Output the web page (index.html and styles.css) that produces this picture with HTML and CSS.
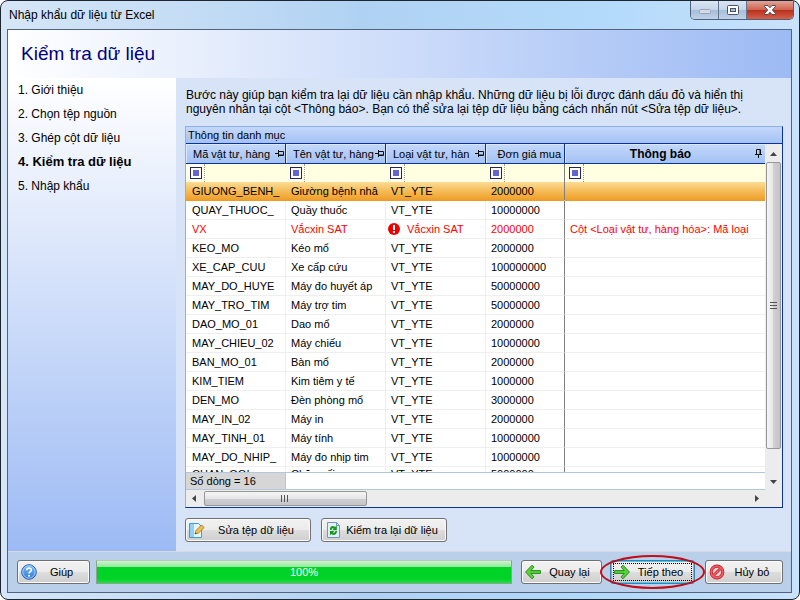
FILE: index.html
```html
<!DOCTYPE html>
<html lang="vi">
<head>
  <meta charset="UTF-8">
  <meta name="viewport" content="width=device-width, initial-scale=1.0">
  <title>Nhập khẩu dữ liệu từ Excel</title>
  <link rel="stylesheet" href="styles.css">
</head>
<body>
<div class="window">
  <header class="titlebar">
    <span class="titlebar-text">Nhập khẩu dữ liệu từ Excel</span>
    <div class="window-buttons">
      <button type="button" class="win-button" aria-label="Minimize">
        <svg width="14" height="14" viewBox="0 0 14 14"><rect x="1.5" y="6.5" width="11" height="4" rx="1" fill="#d3dae4" stroke="#98a5b8"/></svg>
      </button>
      <button type="button" class="win-button" aria-label="Maximize">
        <svg width="14" height="12" viewBox="0 0 14 12"><rect x="1.5" y="1.5" width="11" height="9" rx="1" fill="#fff" stroke="#4a5264"/><rect x="4.5" y="4.5" width="5" height="3" fill="#a9c0dc" stroke="#4a5264"/></svg>
      </button>
      <button type="button" class="win-button win-close" aria-label="Close">
        <svg width="14" height="12" viewBox="0 0 14 12"><path d="M1.5 1.5h3.500l2 2.200 2-2.200h3.500v1L9.300 6l3.200 3.500v1H9L7 8.300 5 10.500H1.500v-1L4.700 6 1.500 2.500z" fill="#fff" stroke="#5c4650"/></svg>
      </button>
    </div>
  </header>

  <div class="client">
    <div class="page-header">
      <h1>Kiểm tra dữ liệu</h1>
    </div>

    <div class="content">
      <nav class="steps">
        <ol>
          <li>1. Giới thiệu</li>
          <li>2. Chọn tệp nguồn</li>
          <li>3. Ghép cột dữ liệu</li>
          <li class="current">4. Kiểm tra dữ liệu</li>
          <li>5. Nhập khẩu</li>
        </ol>
      </nav>

      <main>
        <p class="intro">Bước này giúp bạn kiểm tra lại dữ liệu cần nhập khẩu. Những dữ liệu bị lỗi được đánh dấu đỏ và hiển thị<br>
          nguyên nhân tại cột &lt;Thông báo&gt;. Bạn có thể sửa lại tệp dữ liệu bằng cách nhấn nút &lt;Sửa tệp dữ liệu&gt;.</p>

        <section class="grid">
          <h2 class="grid-caption">Thông tin danh mục</h2>
          <div class="grid-body">
            <div class="grid-view">
              <div class="table-wrap">
                <table>
                  <colgroup>
                    <col class="col-wide"><col class="col-wide"><col class="col-wide"><col class="col-price"><col>
                  </colgroup>
                  <thead>
                  <tr>
                    <th><div class="head"><span>Mã vật tư, hàng</span><svg class="pin" width="9" height="9" viewBox="0 0 9 9"><path d="M0 4.500h3M3.500 1v7M4 2.500h4.500v4H4M4 6h4" fill="none" stroke="#111"/></svg></div></th>
                    <th><div class="head"><span>Tên vật tư, hàng</span><svg class="pin" width="9" height="9" viewBox="0 0 9 9"><path d="M0 4.500h3M3.500 1v7M4 2.500h4.500v4H4M4 6h4" fill="none" stroke="#111"/></svg></div></th>
                    <th><div class="head"><span>Loại vật tư, hàn</span><svg class="pin" width="9" height="9" viewBox="0 0 9 9"><path d="M0 4.500h3M3.500 1v7M4 2.500h4.500v4H4M4 6h4" fill="none" stroke="#111"/></svg></div></th>
                    <th class="price-head"><div class="head"><span>Đơn giá mua</span></div></th>
                    <th class="message-head"><div class="head"><span>Thông báo</span><svg class="pin" width="9" height="9" viewBox="0 0 9 9"><path d="M4.500 9V6M1 5.500h7M2.500 5V.500h4V5M6 1v4" fill="none" stroke="#111"/></svg></div></th>
                  </tr>
                  </thead>
                  <tbody>
                  <tr class="filter-row">
                    <td><div class="filter"><button type="button" aria-label="Lọc mã"></button><input type="text" aria-label="Mã vật tư"></div></td>
                    <td><div class="filter"><button type="button" aria-label="Lọc tên"></button><input type="text" aria-label="Tên vật tư"></div></td>
                    <td><div class="filter"><button type="button" aria-label="Lọc loại"></button><input type="text" aria-label="Loại vật tư"></div></td>
                    <td class="price"><div class="filter"><button type="button" aria-label="Lọc đơn giá"></button><input type="text" aria-label="Đơn giá"></div></td>
                    <td><div class="filter"><button type="button" aria-label="Lọc thông báo"></button><input type="text" aria-label="Thông báo"></div></td>
                  </tr>
                  <tr class="selected"><td>GIUONG_BENH_</td><td>Giường bệnh nhâ</td><td>VT_YTE</td><td class="price">2000000</td><td></td></tr>
                  <tr><td>QUAY_THUOC_</td><td>Quầy thuốc</td><td>VT_YTE</td><td class="price">10000000</td><td></td></tr>
                  <tr class="error">
                    <td>VX</td><td>Vắcxin SAT</td>
                    <td class="with-icon"><div><svg width="12" height="12" viewBox="0 0 12 12"><circle cx="6" cy="6" r="6" fill="#f00000"/><path d="M5 2h2v5H5zM5 8h2v2H5z" fill="#fff"/></svg>Vắcxin SAT</div></td>
                    <td class="price">2000000</td><td>Cột &lt;Loại vật tư, hàng hóa&gt;: Mã loại</td>
                  </tr>
                  <tr><td>KEO_MO</td><td>Kéo mổ</td><td>VT_YTE</td><td class="price">2000000</td><td></td></tr>
                  <tr><td>XE_CAP_CUU</td><td>Xe cấp cứu</td><td>VT_YTE</td><td class="price">100000000</td><td></td></tr>
                  <tr><td>MAY_DO_HUYE</td><td>Máy đo huyết áp</td><td>VT_YTE</td><td class="price">50000000</td><td></td></tr>
                  <tr><td>MAY_TRO_TIM</td><td>Máy trợ tim</td><td>VT_YTE</td><td class="price">50000000</td><td></td></tr>
                  <tr><td>DAO_MO_01</td><td>Dao mổ</td><td>VT_YTE</td><td class="price">2000000</td><td></td></tr>
                  <tr><td>MAY_CHIEU_02</td><td>Máy chiếu</td><td>VT_YTE</td><td class="price">10000000</td><td></td></tr>
                  <tr><td>BAN_MO_01</td><td>Bàn mổ</td><td>VT_YTE</td><td class="price">2000000</td><td></td></tr>
                  <tr><td>KIM_TIEM</td><td>Kim tiêm y tế</td><td>VT_YTE</td><td class="price">1000000</td><td></td></tr>
                  <tr><td>DEN_MO</td><td>Đèn phòng mổ</td><td>VT_YTE</td><td class="price">3000000</td><td></td></tr>
                  <tr><td>MAY_IN_02</td><td>Máy in</td><td>VT_YTE</td><td class="price">2000000</td><td></td></tr>
                  <tr><td>MAY_TINH_01</td><td>Máy tính</td><td>VT_YTE</td><td class="price">10000000</td><td></td></tr>
                  <tr><td>MAY_DO_NHIP_</td><td>Máy đo nhịp tim</td><td>VT_YTE</td><td class="price">10000000</td><td></td></tr>
                  <tr class="last-row"><td>CHAN_GOI_</td><td>Chăn gối</td><td>VT_YTE</td><td class="price">5000000</td><td></td></tr>
                  </tbody>
                </table>
              </div>
              <div class="summary"><span>Số dòng = 16</span></div>
            </div>
            <div class="scroll-v">
              <svg class="arrow" width="7" height="4" viewBox="0 0 7 4"><path d="M0 4L3.500 0 7 4z" fill="#444"/></svg>
              <div class="track"><div class="thumb"><svg width="7" height="8" viewBox="0 0 7 8"><path d="M0 .500h7M0 3.500h7M0 6.500h7" stroke="#555"/></svg></div></div>
              <svg class="arrow" width="7" height="4" viewBox="0 0 7 4"><path d="M0 0L3.500 4 7 0z" fill="#444"/></svg>
            </div>
          </div>
          <div class="scroll-h">
            <svg class="arrow" width="4" height="7" viewBox="0 0 4 7"><path d="M4 0L0 3.500 4 7z" fill="#444"/></svg>
            <div class="track"><div class="thumb"><svg width="8" height="7" viewBox="0 0 8 7"><path d="M.500 0v7M3.500 0v7M6.500 0v7" stroke="#555"/></svg></div></div>
            <svg class="arrow" width="4" height="7" viewBox="0 0 4 7"><path d="M0 0L4 3.500 0 7z" fill="#444"/></svg>
          </div>
        </section>

        <div class="actions">
          <button type="button" class="button">
            <svg width="16" height="16" viewBox="0 0 16 16"><path d="M.500 1.500h9l3 3v11H.500z" fill="#e4f5fe" stroke="#3f9bd8"/><path d="M1 2h4v13H1z" fill="#8fd0f4"/><path d="M6 12l1-3.500L12.500 3l2.700 2.500L9.500 11z" fill="#f3c146" stroke="#9a6d17" stroke-width=".800"/><path d="M6 12l.500-1.600 1.200 1z" fill="#333"/></svg>
            <span>Sửa tệp dữ liệu</span>
          </button>
          <button type="button" class="button">
            <svg width="16" height="16" viewBox="0 0 16 16"><path d="M2.500.500h9l3 3v12h-12z" fill="#e3effa" stroke="#7395bd"/><path d="M11.500.500v3h3" fill="none" stroke="#7395bd"/><path d="M5 8V7C5 3.800 8.300 3.300 10 5l1.800-1.400v4.600H7.300L8.600 6.800C7.700 5.800 6.800 6.400 6.700 8zM12 9c0 4-3.700 4.800-5.300 3L5 13.300V8.900h4.400L8.100 10.200c.900 1 2 .500 2.200-1.200z" fill="#159a20"/></svg>
            <span>Kiểm tra lại dữ liệu</span>
          </button>
        </div>
      </main>
    </div>

    <footer class="footer">
      <button type="button" class="button help">
        <svg width="16" height="16" viewBox="0 0 16 16"><defs><linearGradient id="blue" x2="0" y2="1"><stop stop-color="#7bbcf3"/><stop offset="1" stop-color="#2c7bdd"/></linearGradient></defs><circle cx="8" cy="8" r="7.300" fill="url(#blue)" stroke="#2a5fae"/><circle cx="8" cy="8" r="6.200" fill="none" stroke="#b8dbfa" stroke-width=".800"/><path d="M5.800 6.300c0-3 4.600-2.900 4.600-.300C10.400 7.800 8 7.700 8 9.500" fill="none" stroke="#fff" stroke-width="1.600"/><circle cx="8" cy="11.700" r="1" fill="#fff"/></svg>
        <span>Giúp</span>
      </button>
      <div class="progress" role="progressbar" aria-valuenow="100">100%</div>
      <button type="button" class="button back">
        <svg width="16" height="16" viewBox="0 0 16 16"><path d="M.600 8l6.400-6.800 2 1.900L5.800 6.600H15.400v2.800H5.800L9 12.900l-2 1.900z" fill="#58d236" stroke="#248a1c" stroke-linejoin="round"/></svg>
        <span>Quay lại</span>
      </button>
      <div class="next-wrap">
        <button type="button" class="button next">
          <svg width="16" height="16" viewBox="0 0 16 16"><path d="M15.400 8L9 1.200 7 3.100l3.200 3.500H.600v2.800h9.600L7 12.900l2 1.900z" fill="#58d236" stroke="#248a1c" stroke-linejoin="round"/></svg>
          <span>Tiếp theo</span>
        </button>
      </div>
      <button type="button" class="button cancel">
        <svg width="16" height="16" viewBox="0 0 16 16"><circle cx="8" cy="8" r="5.800" fill="#f6d3d5" stroke="#c8202c" stroke-width="3.200"/><path d="M4 12l8-8" stroke="#c8202c" stroke-width="3"/><circle cx="8" cy="8" r="5.800" fill="none" stroke="#ee6069" stroke-width="1.600"/><path d="M4 12l8-8" stroke="#ee6069" stroke-width="1.400"/></svg>
        <span>Hủy bỏ</span>
      </button>
    </footer>
  </div>
</div>
</body>
</html>
```
FILE: styles.css
```css
* {
  box-sizing: border-box;
}

body {
  margin: 0;
  background: #fff;
  font-family: "Liberation Sans", Arial, sans-serif;
  font-size: 12px;
  line-height: 14px;
  color: #000;
}

button, input {
  font: inherit;
  color: inherit;
}

h1, h2, p, ol {
  margin: 0;
  padding: 0;
  font-weight: normal;
}

.window {
  height: 100vh;
  display: flex;
  flex-direction: column;
  padding: 0 7px 6px 6px;
  border: 1px solid #1c2530;
  border-radius: 8px;
  background: linear-gradient(90deg, #d5e6f7, #c3dcf5 25%, #b0d2f2 45%, #b3dafa 75%, #c8e2fa);
}

/* title bar */
.titlebar {
  flex: none;
  height: 28px;
  display: flex;
  justify-content: space-between;
}

.titlebar-text {
  padding: 7px 2px;
}

.window-buttons {
  display: flex;
  height: 19px;
  margin-right: -2px;
  border: 1px solid #51607a;
  border-top: none;
  border-radius: 0 0 5px 5px;
  overflow: hidden;
}

.win-button {
  width: 28px;
  padding: 0;
  display: flex;
  align-items: center;
  justify-content: center;
  border: none;
  border-right: 1px solid #66758c;
  background: linear-gradient(#d9e5f3, #c4d5e9 50%, #a6bdd8 50%, #bed2e8);
}

.win-close {
  width: 46px;
  border-right: none;
  background: linear-gradient(#e0a598, #d0614e 50%, #b8301c 50%, #d4614a);
}

/* client area */
.client {
  flex: 1;
  min-height: 0;
  display: flex;
  flex-direction: column;
  border: 1px solid #52647c;
  background: #d7e4f8;
}

.page-header {
  flex: none;
  height: 48px;
  padding: 13px;
  background: linear-gradient(90deg, #fff, #9cbaf4);
}

h1 {
  font-size: 19px;
  line-height: 22px;
  color: #000080;
}

.content {
  flex: 1;
  min-height: 0;
  display: flex;
}

.steps {
  flex: none;
  width: 168px;
  padding: 0 10px;
  background: linear-gradient(#fff, #9cbaf4);
}

.steps ol {
  list-style: none;
}

.steps li {
  line-height: 24px;
}

.steps .current {
  font-size: 13px;
  font-weight: bold;
}

main {
  flex: 1;
  min-width: 0;
  display: flex;
  flex-direction: column;
  padding: 10px 8px 9px 9px;
}

.intro {
  padding: 0 1px 10px;
  white-space: nowrap;
}

/* data grid */
.grid {
  flex: 1;
  min-height: 0;
  display: flex;
  flex-direction: column;
  border: 1px solid #8cb0ee;
  border-right-color: #0a3298;
  border-bottom-color: #0a3298;
  background: #fff;
  font-size: 11px;
}

.grid-caption {
  flex: none;
  height: 17px;
  padding: 1px 2px;
  font-size: 11px;
  border-bottom: 1px solid #0a3298;
  background: linear-gradient(#c4d8fa, #a4c2f5);
}

.grid-body {
  flex: 1;
  min-height: 0;
  display: flex;
}

.grid-view {
  flex: 1;
  min-width: 0;
  display: flex;
  flex-direction: column;
}

.table-wrap {
  flex: 1;
  min-height: 0;
  overflow: hidden;
}

table {
  width: 100%;
  table-layout: fixed;
  border-collapse: separate;
  border-spacing: 0;
}

.col-wide {
  width: 100px;
}

.col-price {
  width: 79px;
}

th {
  height: 20px;
  padding: 0;
  font-weight: normal;
  border-right: 1px solid #0a3298;
  border-bottom: 1px solid #0a3298;
  box-shadow: inset 1px 1px #dbe7fc;
  background: linear-gradient(#c4d8fa, #a4c2f5);
}

.head {
  display: flex;
  align-items: center;
  justify-content: space-between;
  padding: 0 1px 0 7px;
  white-space: nowrap;
}

.pin {
  flex: none;
}

.price-head .head {
  justify-content: flex-end;
  padding-right: 3px;
}

.message-head {
  border-right: none;
  font-size: 12px;
  font-weight: bold;
}

.message-head .head {
  padding: 0 2px;
}

.message-head .head span {
  flex: 1;
  text-align: center;
}

td {
  height: 19px;
  padding: 0 0 0 5px;
  overflow: hidden;
  white-space: nowrap;
  border-right: 1px solid #efefef;
  border-bottom: 1px solid #efefef;
}

td:first-child {
  padding-left: 6px;
}

td:last-child {
  border-right: none;
}

td.price {
  border-right-color: #808080;
}

td.with-icon {
  padding-left: 2px;
}

.with-icon div {
  display: flex;
  align-items: center;
  gap: 7px;
}

.last-row td {
  vertical-align: top;
}

.filter-row td {
  height: 18px;
  padding: 0 0 0 4px;
  border-bottom: none;
  border-right-color: #ffffe1;
  background: #ffffe1;
}

.filter-row td.price {
  border-right-color: #808080;
}

.filter {
  display: flex;
  align-items: center;
  gap: 2px;
}

.filter button {
  flex: none;
  width: 12px;
  height: 12px;
  padding: 0;
  border: 1px solid #26265e;
  background: #6464d0;
  box-shadow: inset 0 0 0 2px #fff;
}

.filter input {
  flex: 1;
  min-width: 0;
  height: 18px;
  padding: 0 2px;
  border: none;
  border-left: 1px dotted #999;
  background: transparent;
}

.selected td {
  border-color: transparent;
  background: linear-gradient(#fbdc94, #f5b750 55%, #ee9a22) border-box;
}

.selected td.price {
  border-right-color: #808080;
}

.error td {
  color: #ff0000;
}

.summary {
  flex: none;
  height: 18px;
  border-top: 1px solid #b3c6dc;
  border-bottom: 1px solid #b3c6dc;
}

.summary span {
  display: block;
  width: 100px;
  height: 16px;
  padding: 1px 4px;
  border-right: 1px solid #b3c6dc;
  background: #d6d6d6;
}

.scroll-v, .scroll-h {
  flex: none;
  display: flex;
  align-items: center;
  background: #ececec;
}

.scroll-v {
  width: 17px;
  flex-direction: column;
  padding: 8px 0 6px;
  gap: 6px;
}

.scroll-h {
  height: 17px;
  padding: 0 23px 0 6px;
  gap: 8px;
}

.arrow {
  flex: none;
}

.track {
  flex: 1;
}

.thumb {
  display: flex;
  align-items: center;
  justify-content: center;
  border: 1px solid #979797;
  border-radius: 2px;
}

.scroll-v .thumb {
  width: 15px;
  height: 92%;
  background: linear-gradient(90deg, #f5f5f5, #e6e6e8 50%, #d0d0d4 50%, #c4c4c8);
}

.scroll-h .thumb {
  width: 30%;
  height: 15px;
  background: linear-gradient(#f5f5f5, #e6e6e8 50%, #d0d0d4 50%, #c4c4c8);
}

/* buttons */
.actions {
  flex: none;
  display: flex;
  gap: 10px;
  padding-top: 10px;
}

.button {
  flex: none;
  height: 24px;
  display: flex;
  align-items: center;
  padding: 0 3px;
  border: 1px solid #707070;
  border-radius: 3px;
  background: linear-gradient(#f2f2f2, #ebebeb 50%, #dddddd 50%, #cfcfcf);
  box-shadow: inset 0 0 0 1px #fafafa;
  font-size: 11px;
  white-space: nowrap;
}

.button span {
  flex: 1;
  text-align: center;
}

.actions .button {
  width: 126px;
}

.footer {
  flex: none;
  height: 41px;
  display: flex;
  align-items: center;
  padding: 0 8px 0 9px;
  border-top: 1px solid #d5dbe2;
  background: #b9cfea;
}

.help {
  width: 73px;
}

.progress {
  flex: 1;
  height: 24px;
  margin: 0 9px 0 6px;
  border: 1px solid #8fa08f;
  border-top-color: #b5c8b5;
  background: linear-gradient(#cdf5cd, #93e79b 6px, #00d328 6px, #00d328 80%, #20de44);
  color: #fff;
  font-size: 11px;
  text-align: center;
  line-height: 22px;
}

.back {
  width: 81px;
}

.next-wrap {
  position: relative;
  margin: 0 10px 0 8px;
}

.next {
  width: 85px;
  border-color: #3c7fb1;
  box-shadow: inset 0 0 0 1px #48c8ee;
  outline: 1px dotted #000;
  outline-offset: -4px;
}

/* red ring around the next button */
.next-wrap::after {
  content: "";
  position: absolute;
  inset: -5px -10px;
  border: 2px solid #c00d16;
  border-radius: 50%;
  pointer-events: none;
}

.cancel {
  width: 78px;
}
```
